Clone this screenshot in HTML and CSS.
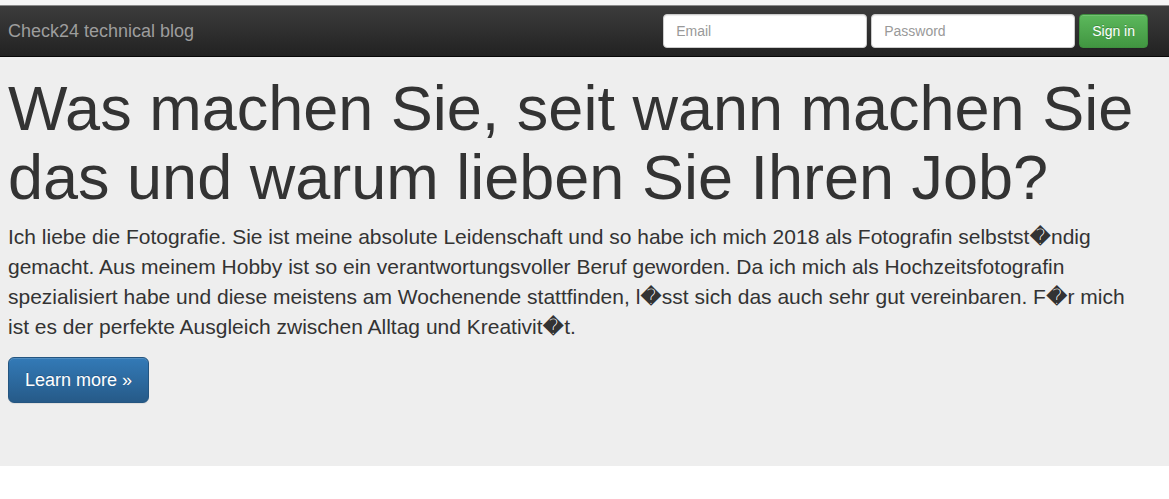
FILE: index.html
```html
<!DOCTYPE html>
<html lang="de">
<head>
<meta charset="utf-8">
<title>Check24 technical blog</title>
<link rel="stylesheet" href="styles.css">
</head>
<body>
<div class="topstrip"></div>
<nav class="navbar">
  <a class="brand" href="#">Check24 technical blog</a>
  <form class="signin">
    <input class="field" type="text" placeholder="Email">
    <input class="field" type="password" placeholder="Password">
    <button class="btn-success" type="button">Sign in</button>
  </form>
</nav>
<div class="jumbotron">
  <h1 class="title">Was machen Sie, seit wann machen Sie das und warum lieben Sie Ihren Job?</h1>
  <p class="lead">Ich liebe die Fotografie. Sie ist meine absolute Leidenschaft und so habe ich mich 2018 als Fotografin selbstst&#xFFFD;ndig gemacht. Aus meinem Hobby ist so ein verantwortungsvoller Beruf geworden. Da ich mich als Hochzeitsfotografin spezialisiert habe und diese meistens am Wochenende stattfinden, l&#xFFFD;sst sich das auch sehr gut vereinbaren. F&#xFFFD;r mich ist es der perfekte Ausgleich zwischen Alltag und Kreativit&#xFFFD;t.</p>
  <p class="actions"><a class="btn-primary" href="#">Learn more &raquo;</a></p>
</div>
</body>
</html>
```

FILE: styles.css
```css
html, body {
  margin: 0;
  padding: 0;
}
body {
  font-family: "Liberation Sans", Arial, "DejaVu Sans", sans-serif;
  font-size: 14px;
  line-height: 1.42857;
  color: #333;
  background: #fff;
}
.topstrip {
  height: 5px;
  background: #f5f5f5;
}
.navbar {
  display: flex;
  align-items: flex-start;
  justify-content: space-between;
  height: 50px;
  border-top: 1px solid #8a8a8a;
  border-bottom: 1px solid #080808;
  background: linear-gradient(to bottom, #3c3c3c 0%, #222 100%);
  padding: 0 21px 0 8px;
}
.brand {
  display: block;
  padding: 15px 0;
  font-size: 18px;
  line-height: 20px;
  color: #9d9d9d;
  text-decoration: none;
}
.signin {
  display: flex;
  gap: 4px;
  margin-top: 8px;
}
.field {
  box-sizing: border-box;
  width: 204px;
  height: 34px;
  padding: 6px 12px;
  font-family: inherit;
  font-size: 14px;
  color: #555;
  background: #fff;
  border: 1px solid #ccc;
  border-radius: 4px;
  box-shadow: inset 0 1px 1px rgba(0,0,0,.075);
  outline: none;
}
.field::placeholder {
  color: #999;
}
.btn-success {
  box-sizing: border-box;
  height: 34px;
  padding: 6px 12px;
  font-family: inherit;
  font-size: 14px;
  line-height: 20px;
  color: #fff;
  background: linear-gradient(to bottom, #5cb85c 0%, #419641 100%);
  border: 1px solid #3e8f3e;
  border-radius: 4px;
  text-shadow: 0 -1px 0 rgba(0,0,0,.2);
  box-shadow: inset 0 1px 0 rgba(255,255,255,.15), 0 1px 1px rgba(0,0,0,.075);
}
.jumbotron {
  background: #eee;
  padding: 17px 30px 48px 8px;
}
.title {
  margin: 0 0 9px;
  font-size: 63px;
  font-weight: 500;
  line-height: 1.1;
  color: #333;
}
.lead {
  margin: 0 0 15px;
  font-size: 21px;
  line-height: 30px;
  font-weight: 200;
}
.actions {
  margin: 0 0 15px;
  font-size: 21px;
  line-height: 30px;
}
.btn-primary {
  display: inline-block;
  padding: 10px 16px;
  font-size: 18px;
  line-height: 24px;
  color: #fff;
  text-decoration: none;
  vertical-align: top;
  background: linear-gradient(to bottom, #337ab7 0%, #265a88 100%);
  border: 1px solid #245580;
  border-radius: 6px;
  text-shadow: 0 -1px 0 rgba(0,0,0,.2);
  box-shadow: inset 0 1px 0 rgba(255,255,255,.15), 0 1px 1px rgba(0,0,0,.075);
}
```
